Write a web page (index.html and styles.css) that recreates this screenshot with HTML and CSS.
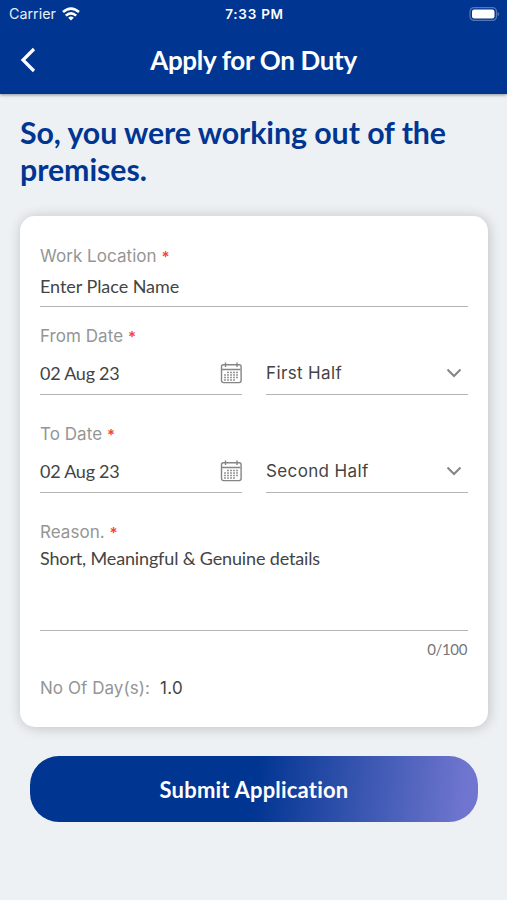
FILE: index.html
```html
<!DOCTYPE html>
<html lang="en">
<head>
<meta charset="utf-8">
<meta name="viewport" content="width=device-width">
<title>Apply for On Duty</title>
<link rel="stylesheet" href="styles.css">
</head>
<body>
<header class="top">
  <div class="status">
    <div class="carrier"><span>Carrier</span>
      <svg class="wifi" width="18" height="14" viewBox="0 0 18 14" fill="none" stroke="#fff" stroke-width="2.6"><path d="M1 5.1Q9-1.8 17 5.1M3.8 8.6Q9 4 14.2 8.6"/><path d="M9 13.6L6.2 10.7Q9 8.5 11.8 10.7Z" fill="#fff" stroke="none"/></svg>
    </div>
    <span class="time">7:33 PM</span>
    <svg class="battery" width="31" height="14" viewBox="0 0 31 14"><rect x="1" y=".6" width="26.5" height="12.8" rx="4" fill="none" stroke="#5577b5" stroke-width="1.2"/><rect x="3" y="2.5" width="22.5" height="9" rx="2.2" fill="#fff"/><path d="M28.7 4.7Q31.3 7 28.7 9.3Z" fill="#6685bd"/></svg>
  </div>
  <nav class="nav">
    <svg class="back" width="16" height="26" viewBox="0 0 16 26" fill="none" stroke="#fff" stroke-width="3.2"><path d="M14 2L3 13L14 24"/></svg>
    <h1 class="title">Apply for On Duty</h1>
  </nav>
</header>
<main class="content">
  <h2 class="headline">So, you were working out of the premises.</h2>
  <form class="card">
    <div class="field location"><label class="label">Work Location <b>*</b></label><div class="value place">Enter Place Name</div></div>
    <div class="label date-label from">From Date <b>*</b></div>
    <div class="row">
      <div class="input"><span>02 Aug 23</span><svg class="cal" width="22" height="22" viewBox="0 0 22 22"><use href="#calendar"/></svg></div>
      <div class="input select"><span>First Half</span><svg class="chev" width="16" height="10" viewBox="0 0 16 10"><path d="M1.5 1.5L8 8L14.5 1.5"/></svg></div>
    </div>
    <div class="label date-label to">To Date <b>*</b></div>
    <div class="row">
      <div class="input"><span>02 Aug 23</span><svg class="cal" width="22" height="22" viewBox="0 0 22 22"><g id="calendar"><rect x="1.5" y="2.8" width="19.6" height="17.8" rx="2"/><path d="M2 7.5H20.5M5.5 .5V5M17 .5V5"/><path class="cells" d="M7 10.5H19M4 13H19M4 15.5H19M4 18H16" stroke-dasharray="2 1"/></g></svg></div>
      <div class="input select"><span>Second Half</span><svg class="chev" width="16" height="10" viewBox="0 0 16 10"><path d="M1.5 1.5L8 8L14.5 1.5"/></svg></div>
    </div>
    <div class="field reason"><label class="label">Reason. <b>*</b></label><div class="value">Short, Meaningful &amp; Genuine details</div></div>
    <div class="count">0/100</div>
    <div class="days"><span class="label">No Of Day(s):</span><span class="number">1.0</span></div>
  </form>
  <button class="submit">Submit Application</button>
</main>
</body>
</html>
```
FILE: styles.css
```css
* { box-sizing: border-box; }
body { margin: 0; height: 900px; background: #edf1f4; color: #444; font-family: Lato, sans-serif; font-variant-ligatures: none; }
.top { height: 94px; background: #003591; color: #fff; box-shadow: 0 1px 3px #0006; }
.status { height: 27px; display: grid; grid-template-columns: 1fr auto 1fr; align-items: center; padding: 0 7px 0 9px; font: 14.3px Inter, sans-serif; }
.carrier { display: flex; align-items: center; gap: 6px; color: #e8eefa; }
.time { font-size: 13.5px; font-weight: 600; letter-spacing: .75px; }
.battery { justify-self: end; }
.nav { height: 65px; display: grid; grid-template-columns: 48px 1fr 48px; align-items: center; }
.back { margin-left: 20px; }
.title { margin: 0; text-align: center; font-size: 26px; line-height: 32px; font-weight: 700; letter-spacing: -.33px; }
.content { padding: 20px 19px 0 20px; }
.headline { margin: 0; height: 102px; color: #003591; font-size: 30.3px; line-height: 37px; font-weight: 700; letter-spacing: -.06px; }
.card { height: 511px; background: #fff; border-radius: 15px; padding: 29px 20px 0; box-shadow: 1px 1px 13px #0003; }
.label { display: block; font: 17px/22px Inter, sans-serif; color: #959595; letter-spacing: .05px; }
.label b { color: #f4433a; font-size: 15px; line-height: 1; font-weight: 600; }
.value { font-size: 18px; line-height: 24px; letter-spacing: -.15px; }
.location { height: 62px; border-bottom: 1px solid #b5b5b5; }
.location .value { margin-top: 7px; letter-spacing: -.05px; }
.from { margin-top: 18px; }
.to { margin-top: 28px; }
.row { display: grid; grid-template-columns: 202px 202px; justify-content: space-between; margin-top: 5px; }
.input { height: 43px; border-bottom: 1px solid #b5b5b5; display: flex; align-items: center; justify-content: space-between; font-size: 18px; letter-spacing: -.25px; }
.select { font: 17px Inter, sans-serif; padding-right: 6px; letter-spacing: .37px; }
.cal { fill: none; stroke: #858585; stroke-width: 1.4; }
.cells { stroke: #999; stroke-width: 1.5; }
.chev { fill: none; stroke: #858585; stroke-width: 2; }
.reason { margin-top: 28px; height: 110px; border-bottom: 1px solid #b5b5b5; }
.reason .value { margin-top: 3px; }
.count { text-align: right; font-size: 15px; line-height: 18px; margin: 9px 1px 0 0; color: #777; letter-spacing: -.35px; }
.days { display: flex; gap: 10px; margin-top: 19px; }
.number { font: 17px/22px Inter, sans-serif; letter-spacing: .4px; }
.submit { display: block; width: 448px; height: 66px; margin: 29px 0 0 10px; border: 0; border-radius: 29px; color: #fff; background: linear-gradient(95deg,#003591 50%,#7076cf 97%); font: 700 22px Lato, sans-serif; font-variant-ligatures: none; letter-spacing: .2px; }
```
